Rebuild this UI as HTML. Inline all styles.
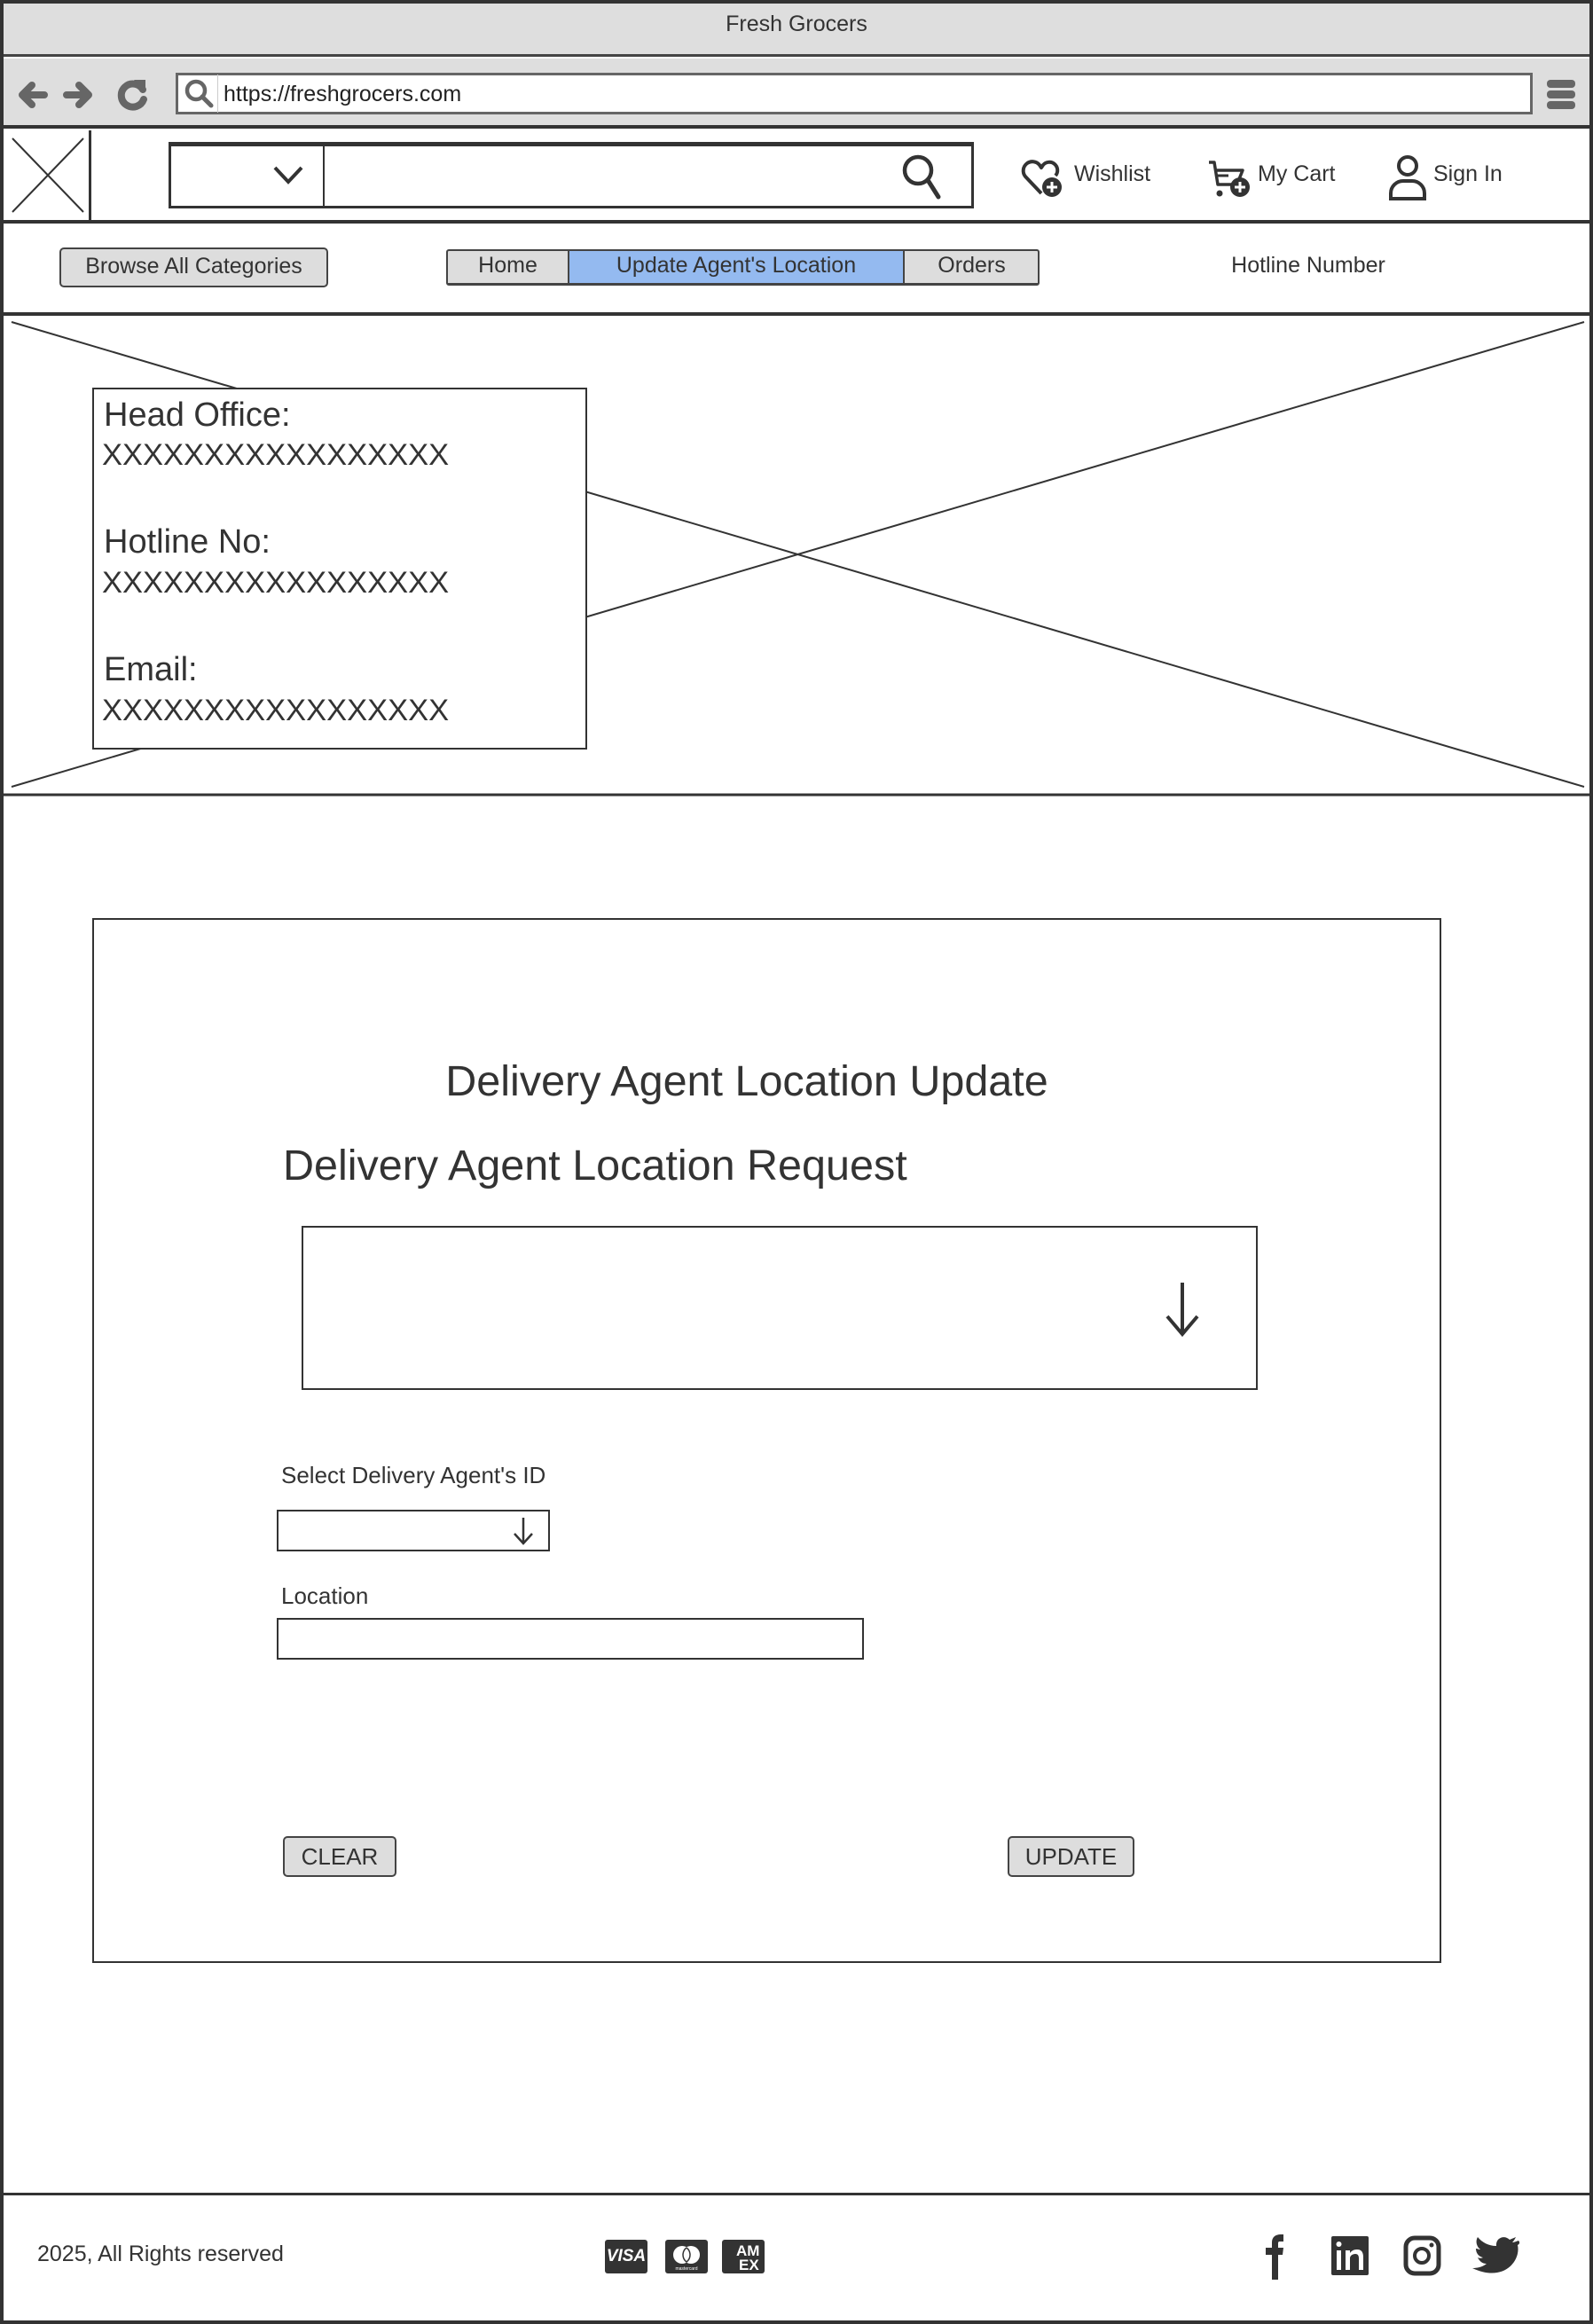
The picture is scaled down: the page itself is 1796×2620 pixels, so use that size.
<!DOCTYPE html>
<html><head><meta charset="utf-8"><style>
*{margin:0;padding:0;box-sizing:border-box}
body{width:1796px;height:2620px;position:relative;background:#fff;font-family:"Liberation Sans",sans-serif;color:#333;overflow:hidden}
.a{position:absolute}
.t{position:absolute;white-space:nowrap;line-height:1}
.btn{position:absolute;background:#ddd;border:2px solid #444;border-radius:5px}
</style></head><body>
<div class="a" style="left:0;top:0;width:1796px;height:2620px;border:4px solid #333;border-top-width:4px"></div>
<div class="a" style="left:4px;top:4px;width:1788px;height:60px;background:#dedede;border-bottom:3px solid #444"></div>
<div class="t" style="left:0;width:1796px;text-align:center;top:15px;font-size:25px;color:#333">Fresh Grocers</div>
<div class="a" style="left:4px;top:66px;width:1788px;height:79px;background:#dedede;border-bottom:4px solid #333"></div>
<svg class="a" style="left:18px;top:84px" width="150" height="46" viewBox="0 0 150 46">
<g stroke="#666" stroke-width="8" stroke-linecap="round" stroke-linejoin="round" fill="none">
<path d="M32 23H8M18 12L7 23L18 34"/><path d="M57 23H81M71 12L82 23L71 34"/>
<path d="M143 17A13 13 0 1 0 144 28"/></g>
<path d="M133 6L146 6L146 20Z" fill="#666"/></svg>
<div class="a" style="left:198px;top:82px;width:1530px;height:47px;background:#fff;border:3px solid #666"></div>
<div class="a" style="left:245px;top:84px;width:1px;height:43px;background:#ccc"></div>
<svg class="a" style="left:207px;top:88px" width="36" height="36" viewBox="0 0 36 36"><circle cx="14" cy="14" r="10" stroke="#666" stroke-width="4.5" fill="none"/><path d="M21 21L31 31" stroke="#666" stroke-width="5" stroke-linecap="round"/></svg>
<div class="t" style="left:252px;top:94px;font-size:25px;color:#222">https://freshgrocers.com</div>
<div class="a" style="left:1744px;top:90px;width:32px;height:9px;background:#666;border-radius:4px"></div>
<div class="a" style="left:1744px;top:102px;width:32px;height:9px;background:#666;border-radius:4px"></div>
<div class="a" style="left:1744px;top:114px;width:32px;height:9px;background:#666;border-radius:4px"></div>
<div class="a" style="left:4px;top:147px;width:99px;height:101px;border-right:3px solid #333"></div>
<svg class="a" style="left:5px;top:147px" width="98" height="101"><path d="M9 9L89 92M89 9L9 92" stroke="#333" stroke-width="2"/></svg>
<div class="a" style="left:190px;top:160px;width:908px;height:75px;border:3px solid #333;border-top-width:5px"></div>
<div class="a" style="left:364px;top:162px;width:2px;height:71px;background:#333"></div>
<svg class="a" style="left:306px;top:183px" width="40" height="30"><path d="M4 6L19 22L34 6" stroke="#333" stroke-width="4" fill="none"/></svg>
<svg class="a" style="left:1015px;top:172px" width="50" height="56"><circle cx="20" cy="20" r="15" stroke="#333" stroke-width="4.5" fill="none"/><path d="M31 31L43 50" stroke="#333" stroke-width="5" stroke-linecap="round"/></svg>
<div class="a" style="left:4px;top:248px;width:1788px;height:4px;background:#333"></div>
<svg class="a" style="left:1150px;top:178px" width="50" height="46" viewBox="0 0 50 46"><path d="M24 40L6 21A9 9 0 0 1 22 8L24 11L26 8A9 9 0 0 1 40 20" stroke="#333" stroke-width="4" fill="none" stroke-linejoin="round"/><circle cx="36" cy="33" r="11" fill="#333"/><path d="M36 27V39M30 33H42" stroke="#fff" stroke-width="3"/></svg>
<div class="t" style="left:1211px;top:184px;font-size:25px">Wishlist</div>
<svg class="a" style="left:1361px;top:178px" width="50" height="48" viewBox="0 0 50 48"><path d="M2 5H8L12 30H28M10 14H40L36 24" stroke="#333" stroke-width="3.5" fill="none" stroke-linejoin="round"/><path d="M10 20H24" stroke="#333" stroke-width="3"/><circle cx="14" cy="40" r="3.5" fill="#333"/><circle cx="37" cy="33" r="11" fill="#333"/><path d="M37 27V39M31 33H43" stroke="#fff" stroke-width="3"/></svg>
<div class="t" style="left:1418px;top:184px;font-size:25px">My Cart</div>
<svg class="a" style="left:1565px;top:174px" width="44" height="52" viewBox="0 0 44 52"><circle cx="22" cy="13" r="10" stroke="#333" stroke-width="4" fill="none"/><path d="M3 50V44A14 14 0 0 1 17 30H27A14 14 0 0 1 41 44V50Z" stroke="#333" stroke-width="4" fill="none"/></svg>
<div class="t" style="left:1616px;top:184px;font-size:25px">Sign In</div>
<div class="btn" style="left:67px;top:279px;width:303px;height:45px"></div>
<div class="t" style="left:67px;width:303px;text-align:center;top:288px;font-size:25px">Browse All Categories</div>
<div class="a" style="left:503px;top:281px;width:669px;height:41px;background:#ddd;border:2px solid #444;border-bottom-width:3px;border-radius:3px"></div>
<div class="a" style="left:640px;top:283px;width:380px;height:36px;background:#94baf0;border-left:2px solid #444;border-right:2px solid #444"></div>
<div class="t" style="left:505px;width:135px;text-align:center;top:287px;font-size:25px">Home</div>
<div class="t" style="left:640px;width:380px;text-align:center;top:287px;font-size:25px">Update Agent's Location</div>
<div class="t" style="left:1020px;width:151px;text-align:center;top:287px;font-size:25px">Orders</div>
<div class="t" style="left:1380px;width:190px;text-align:center;top:287px;font-size:25px">Hotline Number</div>
<div class="a" style="left:4px;top:352px;width:1788px;height:4px;background:#333"></div>
<svg class="a" style="left:0;top:354px" width="1796" height="545"><path d="M13 9L1786 533M13 533L1786 9" stroke="#333" stroke-width="2"/><path d="M0 542H1796" stroke="#333" stroke-width="3"/></svg>
<div class="a" style="left:104px;top:437px;width:558px;height:408px;background:#fff;border:2px solid #333"></div>
<div class="t" style="left:117px;top:449px;font-size:38px">Head Office:</div>
<div class="t" style="left:115px;top:496px;font-size:34.5px">XXXXXXXXXXXXXXXXX</div>
<div class="t" style="left:117px;top:592px;font-size:38px">Hotline No:</div>
<div class="t" style="left:115px;top:640px;font-size:34.5px">XXXXXXXXXXXXXXXXX</div>
<div class="t" style="left:117px;top:736px;font-size:38px">Email:</div>
<div class="t" style="left:115px;top:784px;font-size:34.5px">XXXXXXXXXXXXXXXXX</div>
<div class="a" style="left:104px;top:1035px;width:1521px;height:1178px;border:2px solid #333"></div>
<div class="t" style="left:480px;width:724px;text-align:center;top:1195px;font-size:48.5px">Delivery Agent Location Update</div>
<div class="t" style="left:319px;top:1290px;font-size:48.5px">Delivery Agent Location Request</div>
<div class="a" style="left:340px;top:1382px;width:1078px;height:185px;border:2px solid #333"></div>
<svg class="a" style="left:1308px;top:1440px" width="50" height="70"><path d="M25 6V64M8 44L25 64L42 44" stroke="#333" stroke-width="4" fill="none"/></svg>
<div class="t" style="left:317px;top:1650px;font-size:26px">Select Delivery Agent's ID</div>
<div class="a" style="left:312px;top:1702px;width:308px;height:47px;border:2px solid #333"></div>
<svg class="a" style="left:575px;top:1708px" width="30" height="36"><path d="M15 3V32M5 21L15 32L25 21" stroke="#333" stroke-width="2.5" fill="none"/></svg>
<div class="t" style="left:317px;top:1786px;font-size:26px">Location</div>
<div class="a" style="left:312px;top:1824px;width:662px;height:47px;border:2px solid #333"></div>
<div class="btn" style="left:319px;top:2070px;width:128px;height:46px"></div>
<div class="t" style="left:319px;width:128px;text-align:center;top:2080px;font-size:26px">CLEAR</div>
<div class="btn" style="left:1136px;top:2070px;width:143px;height:46px"></div>
<div class="t" style="left:1136px;width:143px;text-align:center;top:2080px;font-size:26px">UPDATE</div>
<div class="a" style="left:4px;top:2472px;width:1788px;height:3px;background:#333"></div>
<div class="t" style="left:42px;top:2529px;font-size:25px">2025, All Rights reserved</div>
<div class="a" style="left:682px;top:2525px;width:48px;height:38px;background:#333;border-radius:3px;color:#fff;font:bold italic 19px 'Liberation Sans',sans-serif;text-align:center;line-height:38px">VISA</div>
<div class="a" style="left:750px;top:2525px;width:48px;height:38px;background:#333;border-radius:3px"></div>
<svg class="a" style="left:750px;top:2525px" width="48" height="38"><circle cx="19" cy="17" r="10" fill="#fff"/><circle cx="29" cy="17" r="10" fill="#fff"/><path d="M24 9A10 10 0 0 1 24 25A10 10 0 0 1 24 9" stroke="#333" stroke-width="1.5" fill="none"/><text x="24" y="34" font-size="5" fill="#fff" text-anchor="middle" font-family="Liberation Sans">mastercard</text></svg>
<div class="a" style="left:814px;top:2525px;width:48px;height:38px;background:#333;border-radius:3px;overflow:hidden"></div>
<svg class="a" style="left:814px;top:2525px" width="48" height="38"><text x="16" y="18" font-size="17" font-weight="bold" fill="#fff" font-family="Liberation Sans">AM</text><text x="19" y="34" font-size="17" font-weight="bold" fill="#fff" font-family="Liberation Sans">EX</text></svg>
<svg class="a" style="left:1420px;top:2518px" width="300" height="52" viewBox="0 0 300 52">
<path d="M14 52V24H7V16H14V10C14 4 18 1 24 1H27V9H23C21 9 21 10 21 12V16H27L26 24H21V52Z" fill="#333"/>
<rect x="81" y="3" width="42" height="44" rx="2" fill="#333"/><rect x="87" y="19" width="5" height="22" fill="#fff"/><circle cx="89.5" cy="12" r="3" fill="#fff"/><path d="M97 19H102V22C104 19 107 18 110 18C115 18 117 21 117 27V41H112V28C112 25 111 23 108 23C105 23 102 25 102 28V41H97Z" fill="#fff"/>
<rect x="165" y="5" width="37" height="40" rx="10" stroke="#333" stroke-width="5" fill="none"/><circle cx="183" cy="25" r="8" stroke="#333" stroke-width="4" fill="none"/><circle cx="194" cy="13" r="2.5" fill="#333"/>
<path d="M292 8C289 9 287 10 285 10C287 8 288 6 289 4C287 5 284 6 282 7C276 1 266 5 267 14C258 14 251 10 246 4C243 9 245 15 249 18C247 18 246 17 244 17C244 22 247 26 252 27C250 28 248 28 246 27C248 31 251 34 256 34C251 38 245 39 240 39C276 56 295 30 291 13C293 12 294 10 292 8Z" fill="#333"/>
</svg>
</body></html>
